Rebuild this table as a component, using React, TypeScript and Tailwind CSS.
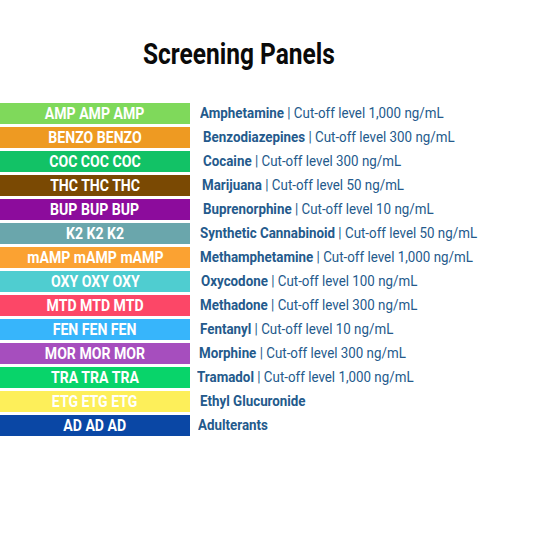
import React from "react";

type Row = { code: string; bg: string; name: string; cut?: string; pl: string };

const rows: Row[] = [
  { code: "AMP AMP AMP", bg: "bg-[#7fd95b]", name: "Amphetamine", cut: "1,000 ng/mL", pl: "pl-[10px]" },
  { code: "BENZO BENZO", bg: "bg-[#ee9a22]", name: "Benzodiazepines", cut: "300 ng/mL", pl: "pl-[13px]" },
  { code: "COC COC COC", bg: "bg-[#12c266]", name: "Cocaine", cut: "300 ng/mL", pl: "pl-[13px]" },
  { code: "THC THC THC", bg: "bg-[#7a4903]", name: "Marijuana", cut: "50 ng/mL", pl: "pl-[12px]" },
  { code: "BUP BUP BUP", bg: "bg-[#8c0c9c]", name: "Buprenorphine", cut: "10 ng/mL", pl: "pl-[13px]" },
  { code: "K2 K2 K2", bg: "bg-[#6aa6ac]", name: "Synthetic Cannabinoid", cut: "50 ng/mL", pl: "pl-[10px]" },
  { code: "mAMP mAMP mAMP", bg: "bg-[#fba232]", name: "Methamphetamine", cut: "1,000 ng/mL", pl: "pl-[10px]" },
  { code: "OXY OXY OXY", bg: "bg-[#4fcdd0]", name: "Oxycodone", cut: "100 ng/mL", pl: "pl-[11px]" },
  { code: "MTD MTD MTD", bg: "bg-[#fc4767]", name: "Methadone", cut: "300 ng/mL", pl: "pl-[10px]" },
  { code: "FEN FEN FEN", bg: "bg-[#37b5fb]", name: "Fentanyl", cut: "10 ng/mL", pl: "pl-[10px]" },
  { code: "MOR MOR MOR", bg: "bg-[#a64ebe]", name: "Morphine", cut: "300 ng/mL", pl: "pl-[9px]" },
  { code: "TRA TRA TRA", bg: "bg-[#08d46a]", name: "Tramadol", cut: "1,000 ng/mL", pl: "pl-[7px]" },
  { code: "ETG ETG ETG", bg: "bg-[#fdef5a]", name: "Ethyl Glucuronide", pl: "pl-[10px]" },
  { code: "AD AD AD", bg: "bg-[#0a47a5]", name: "Adulterants", pl: "pl-[8px]" },
];

export default function App() {
  return (
    <div
      className="w-[533px] h-[533px] bg-white relative overflow-hidden"
      style={{ fontFamily: 'Roboto, "Liberation Sans", sans-serif' }}
    >
      <div className="pt-[36px] pl-[143px]">
        <h1 className="inline-block origin-left scale-x-[0.83] text-[29.5px] leading-[36px] font-bold text-[#0a0a0a] whitespace-nowrap">
          Screening Panels
        </h1>
      </div>
      <div className="mt-[31px] flex flex-col gap-[3px]">
        {rows.map((r) => (
          <div key={r.code} className="flex items-center h-[21px]">
            <div
              className={`${r.bg} w-[190px] h-full shrink-0 flex items-center justify-center text-white font-bold text-[16px] leading-none`}
            >
              <span className="inline-block scale-x-[0.88] whitespace-nowrap">{r.code}</span>
            </div>
            <div className={`${r.pl} text-[15px] leading-none text-[#245a8c] whitespace-nowrap`}>
              <span className="inline-block origin-left scale-x-[0.89]">
                <span className="font-bold">{r.name}</span>
                {r.cut ? <span> | Cut-off level {r.cut}</span> : null}
              </span>
            </div>
          </div>
        ))}
      </div>
    </div>
  );
}
